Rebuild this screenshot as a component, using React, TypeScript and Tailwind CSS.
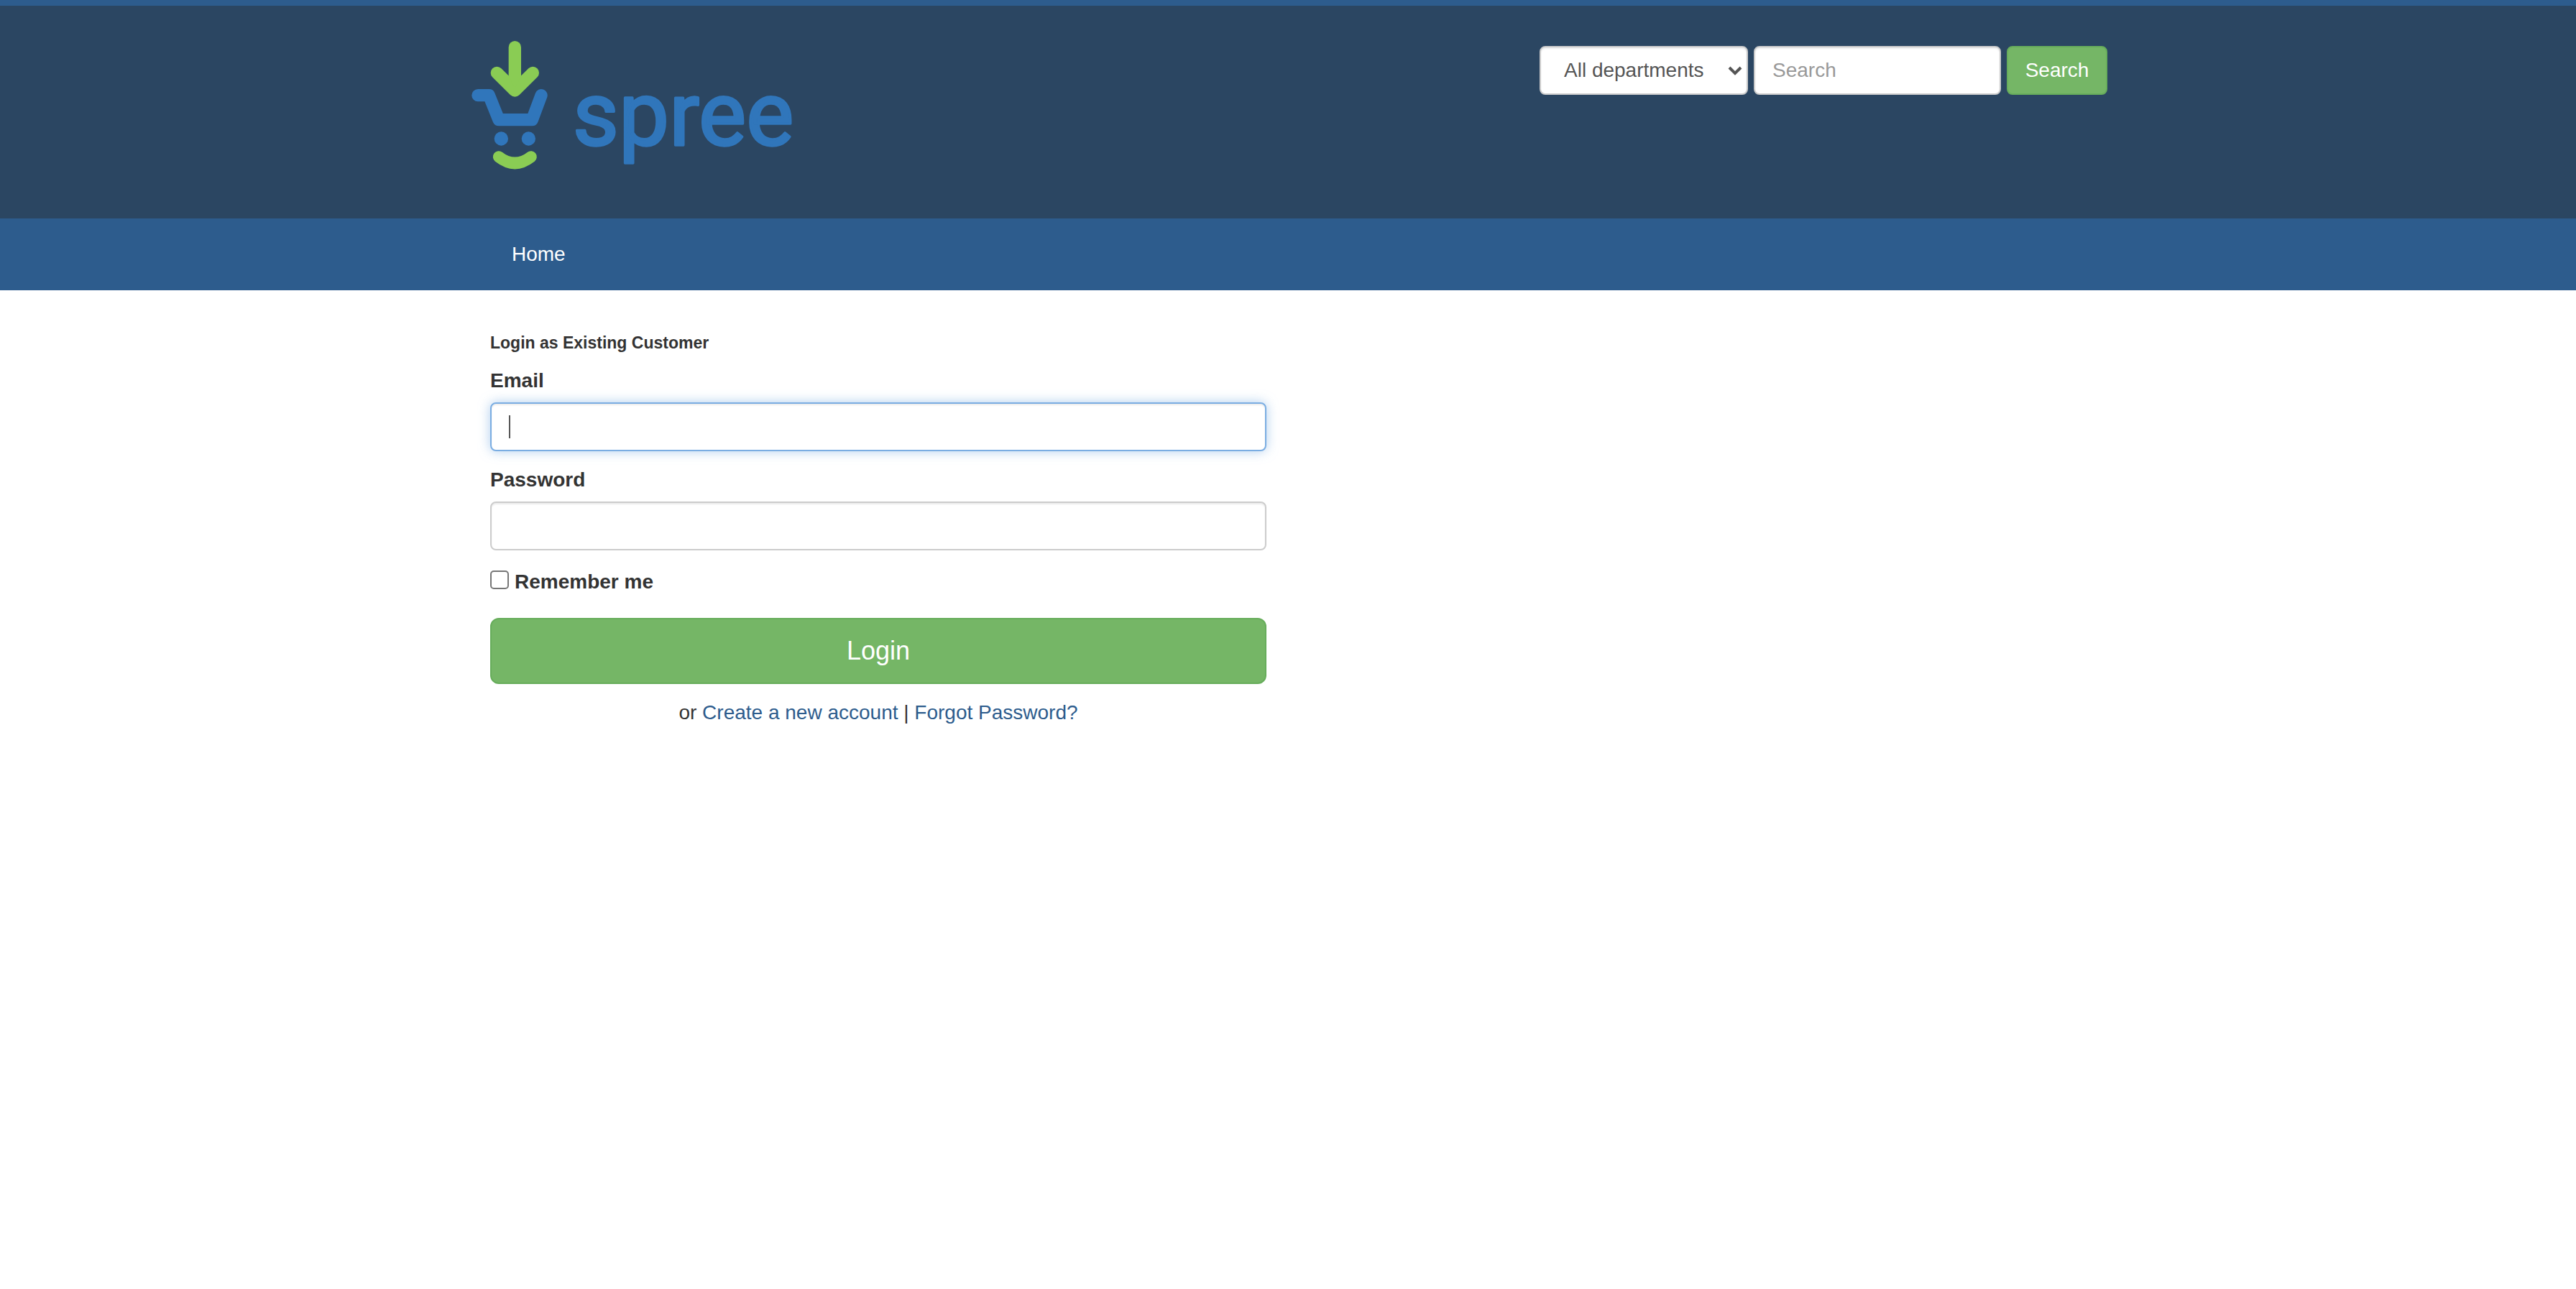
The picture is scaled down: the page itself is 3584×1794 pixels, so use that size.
import { useState } from "react";

const inputBase =
  "block h-[68px] rounded-lg border-2 bg-white px-6 text-[28px] leading-10 text-[#555555] outline-none";
const labelBase = "text-[28px] leading-10 font-bold text-[#333333]";

function Logo() {
  return (
    <svg
      viewBox="36 24 1368 576"
      className="block h-48 w-[456px] overflow-visible"
      role="img"
      aria-label="spree"
    >
      <g fill="none" stroke="#8acc54" strokeLinecap="round" strokeLinejoin="round" strokeWidth="52">
        <path d="M229 77V230" />
        <path d="M154 184L229 258L304 184" />
        <path d="M203 195H255L229 250Z" fill="#8acc54" stroke="none" />
        <path d="M162 535Q229 587 296 535" strokeWidth="49" />
      </g>
      <path
        d="M75 278H121L162 380H301L339 278"
        fill="none"
        stroke="#3076bb"
        strokeWidth="52"
        strokeLinecap="round"
        strokeLinejoin="round"
      />
      <circle cx="172" cy="459" r="29" fill="#3076bb" />
      <circle cx="286" cy="459" r="29" fill="#3076bb" />
      <text
        x="470"
        y="486"
        fontFamily="Roboto, 'Liberation Sans', sans-serif"
        fontSize="374"
        fill="#3076bb"
        stroke="#3076bb"
        strokeWidth="10"
        strokeLinejoin="round"
      >
        spree
      </text>
    </svg>
  );
}

function SearchForm() {
  return (
    <form className="flex gap-2 pt-4" onSubmit={(e) => e.preventDefault()}>
      <div className="relative">
        <select
          aria-label="Department"
          className="block h-[68px] w-[290px] appearance-none rounded-lg border-2 border-[#cccccc] bg-white pr-10 pl-8 text-[28px] text-[#555555] shadow-[inset_0_2px_2px_rgba(0,0,0,0.075)] outline-none"
        >
          <option>All departments</option>
        </select>
        <svg
          viewBox="0 0 20 14"
          className="pointer-events-none absolute top-7 right-2 h-[14px] w-5"
          fill="none"
          stroke="#555555"
          strokeWidth="4"
        >
          <path d="M2 2L10 10L18 2" />
        </svg>
      </div>
      <input
        type="search"
        aria-label="Search"
        placeholder="Search"
        className={`${inputBase} w-[344px] border-[#cccccc] shadow-[inset_0_2px_2px_rgba(0,0,0,0.075)] placeholder:text-[#999999]`}
      />
      <button
        type="submit"
        className="h-[68px] w-[140px] rounded-lg border-2 border-[#67ad5b] bg-[#75b666] text-[28px] leading-10 text-white"
      >
        Search
      </button>
    </form>
  );
}

function LoginForm() {
  const [email, setEmail] = useState("");
  return (
    <form onSubmit={(e) => e.preventDefault()}>
      <div className="mb-5">
        <label htmlFor="email" className={`${labelBase} mb-[10px] block`}>
          Email
        </label>
        <div className="relative">
          <input
            id="email"
            type="email"
            value={email}
            onChange={(e) => setEmail(e.target.value)}
            className={`${inputBase} w-full border-[#7aade2] shadow-[inset_0_2px_2px_rgba(0,0,0,0.075),0_0_16px_rgba(122,173,226,0.6)]`}
          />
          {email === "" && (
            <span className="pointer-events-none absolute top-[18px] left-[26px] h-8 w-[2px] bg-[#555555]" />
          )}
        </div>
      </div>
      <div className="mb-6">
        <label htmlFor="password" className={`${labelBase} mb-[10px] block`}>
          Password
        </label>
        <input
          id="password"
          type="password"
          className={`${inputBase} w-full border-[#cccccc] shadow-[inset_0_2px_2px_rgba(0,0,0,0.075)]`}
        />
      </div>
      <div className="mb-[30px] flex items-start gap-2">
        <input
          id="remember"
          type="checkbox"
          className="mt-1 size-[26px] appearance-none rounded-[5px] border-2 border-[#767676] bg-white checked:bg-[#2d5c8d]"
        />
        <label htmlFor="remember" className={labelBase}>
          Remember me
        </label>
      </div>
      <button
        type="submit"
        className="block w-full rounded-xl border-2 border-[#67ad5b] bg-[#75b666] py-5 text-[36px] leading-[48px] text-white"
      >
        Login
      </button>
    </form>
  );
}

export default function App() {
  return (
    <div className="min-h-screen bg-white font-['Liberation_Sans',Arial,sans-serif] text-[28px] leading-10 text-[#333333]">
      <header className="border-t-8 border-[#2d5c8d] bg-[#2b4662]">
        <div className="mx-auto flex max-w-[2340px] items-start justify-between px-[30px] pt-10 pb-16">
          <a href="#home">
            <Logo />
          </a>
          <SearchForm />
        </div>
      </header>
      <nav className="bg-[#2d5c8d]">
        <div className="mx-auto max-w-[2340px] px-[60px]">
          <a href="#home" className="inline-block p-[30px] align-top text-white">
            Home
          </a>
        </div>
      </nav>
      <div className="mx-auto max-w-[2340px] px-[30px] pt-[60px]">
        <main className="w-1/2 px-[30px]">
          <h1 className="mb-5 text-[23px] leading-[26px] font-bold">
            Login as Existing Customer
          </h1>
          <LoginForm />
          <p className="mt-5 text-center">
            or{" "}
            <a href="#signup" className="text-[#2d5c8d]">
              Create a new account
            </a>{" "}
            |{" "}
            <a href="#recover" className="text-[#2d5c8d]">
              Forgot Password?
            </a>
          </p>
        </main>
      </div>
    </div>
  );
}
